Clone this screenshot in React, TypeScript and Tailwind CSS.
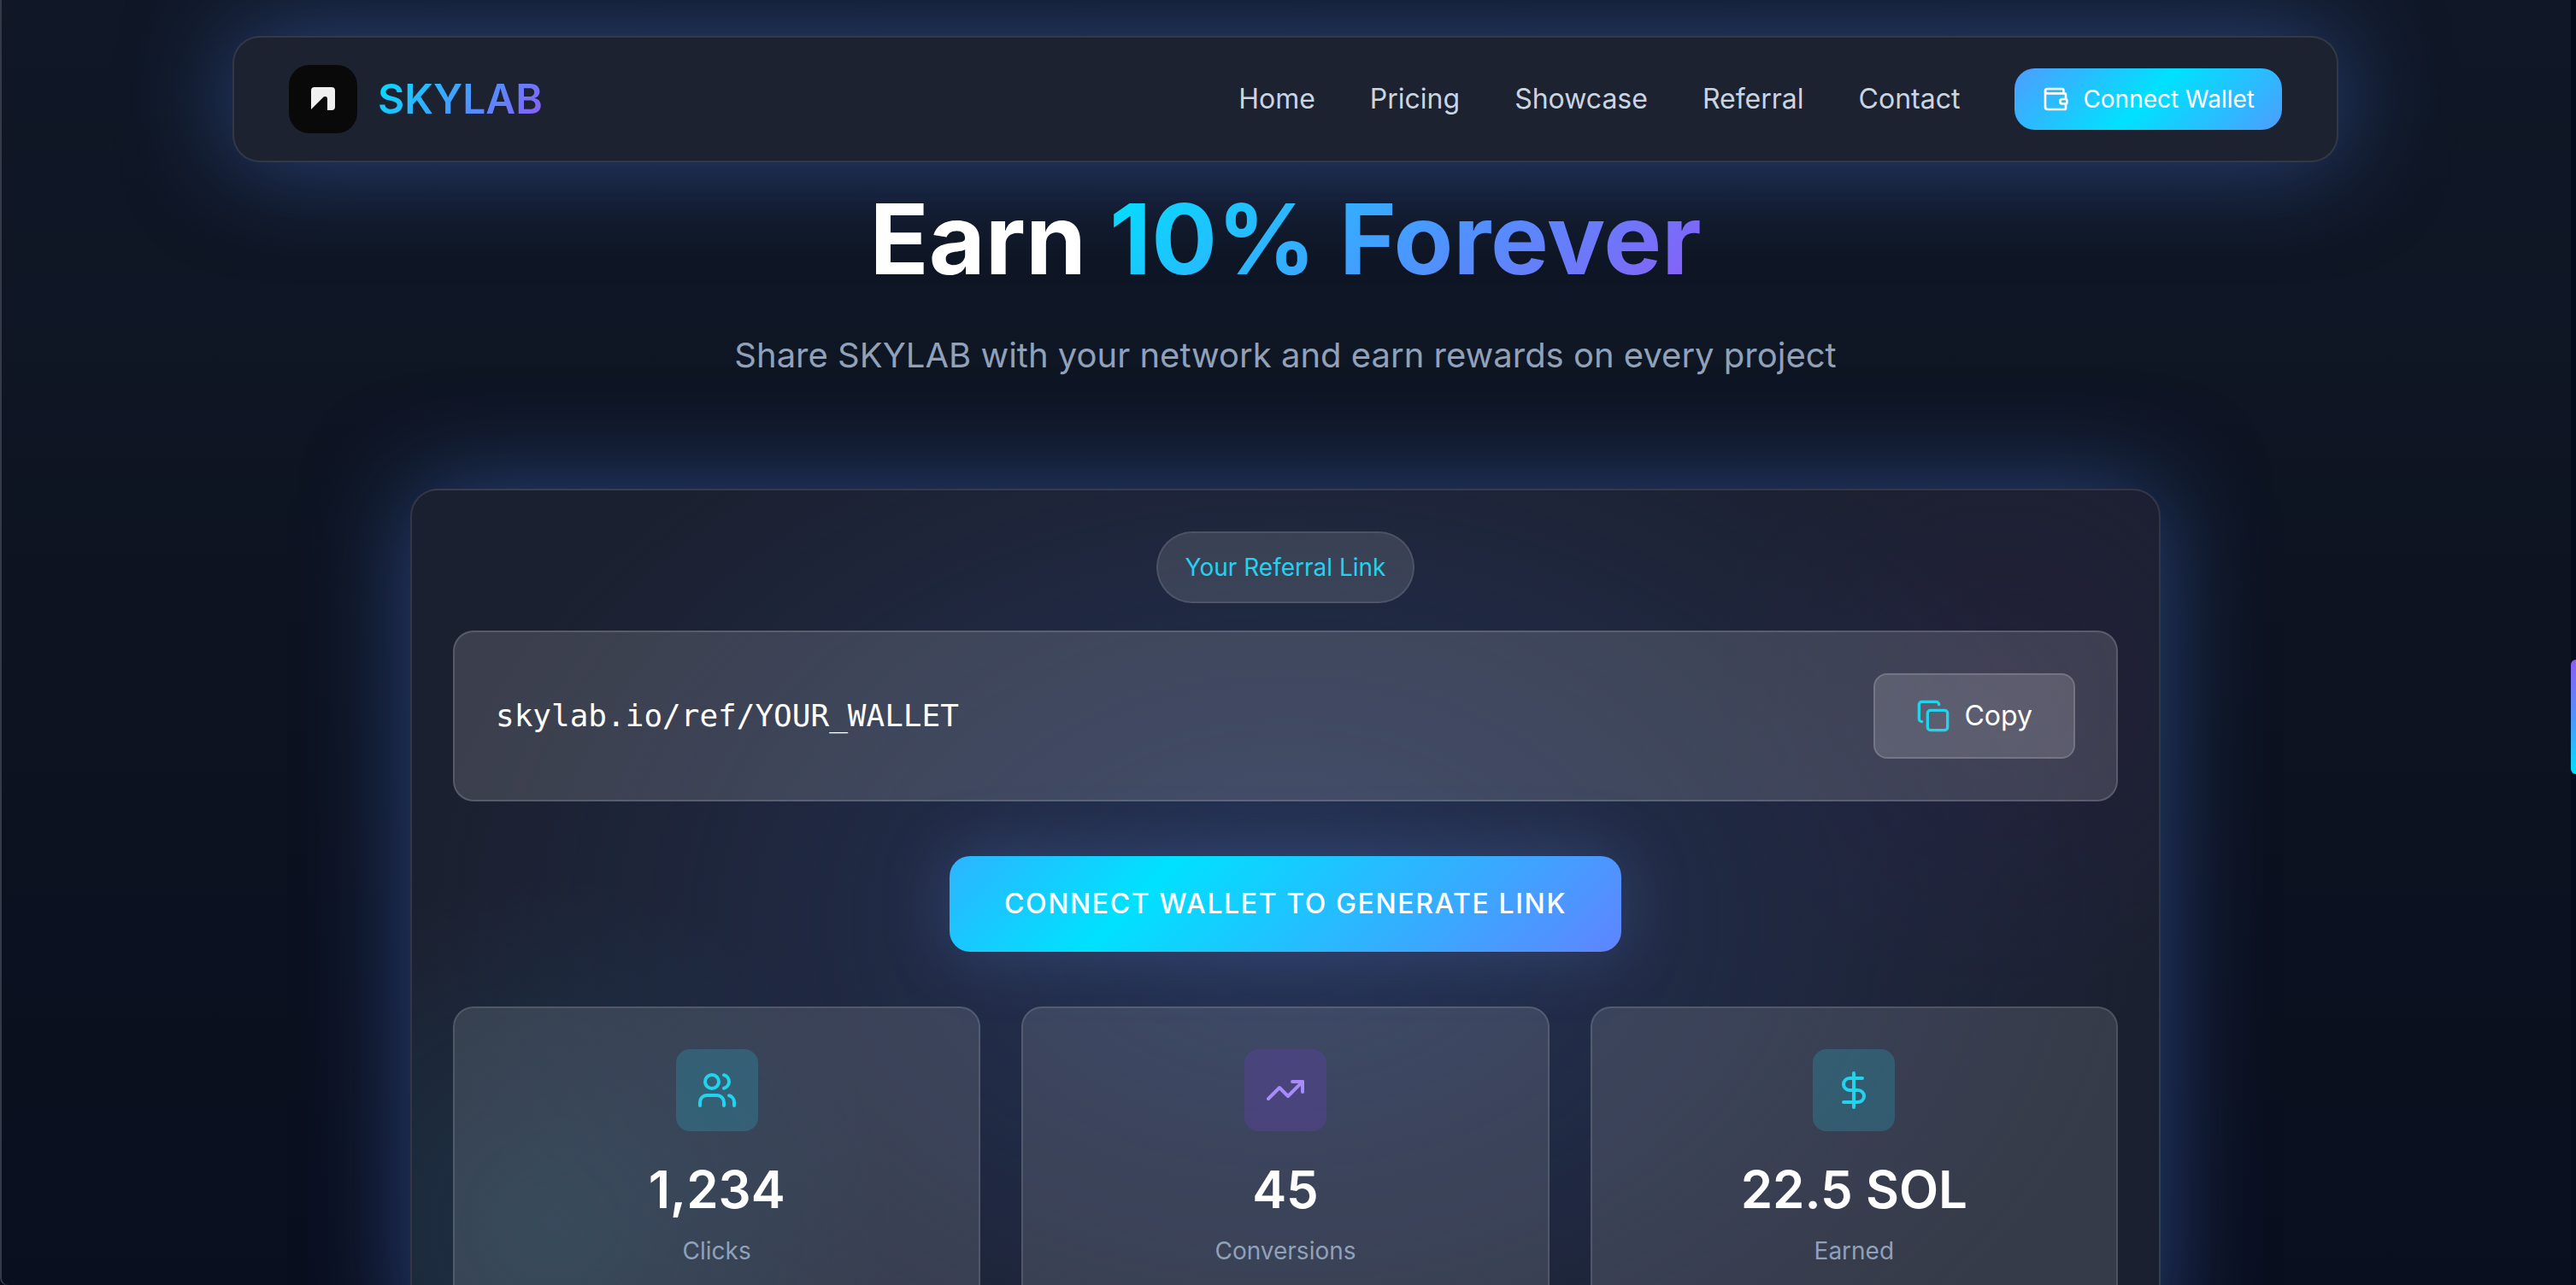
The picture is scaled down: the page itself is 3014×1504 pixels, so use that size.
import { useState } from 'react';
import { Copy, DollarSign, TrendingUp, Users, type LucideIcon } from 'lucide-react';

interface Stat {
  label: string;
  value: string;
  icon: LucideIcon;
  tile: string;
}

const links = ['Home', 'Pricing', 'Showcase', 'Referral', 'Contact'];

const stats: Stat[] = [
  { label: 'Clicks', value: '1,234', icon: Users, tile: 'bg-[#22d3ee]/20 text-[#22d3ee]' },
  { label: 'Conversions', value: '45', icon: TrendingUp, tile: 'bg-[#7c3aed]/20 text-[#a78bfa]' },
  { label: 'Earned', value: '22.5 SOL', icon: DollarSign, tile: 'bg-[#22d3ee]/20 text-[#22d3ee]' },
];

function WalletIcon() {
  return (
    <svg
      viewBox="0 0 24 24"
      fill="none"
      stroke="currentColor"
      strokeWidth="2"
      strokeLinecap="round"
      strokeLinejoin="round"
      className="size-8"
      aria-hidden="true"
    >
      <path d="M19 7V4a1 1 0 0 0-1-1H5a2 2 0 0 0 0 4h15a1 1 0 0 1 1 1v4h-3a2 2 0 0 0 0 4h3a1 1 0 0 0 1-1v-2a1 1 0 0 0-1-1" />
      <path d="M3 5v14a2 2 0 0 0 2 2h15a1 1 0 0 0 1-1v-4" />
    </svg>
  );
}

function Logo() {
  return (
    <a href="#home" className="flex items-center gap-6">
      <span className="flex size-20 items-center justify-center rounded-3xl bg-[#090909]">
        <svg viewBox="0 0 28 28" className="size-7" aria-hidden="true">
          <path d="M0 4a4 4 0 0 1 4-4h20a4 4 0 0 1 4 4v19a4 4 0 0 1-4 4h-5V14q0-3-2-3h-1q-1 0-2 1L0 26z" fill="#f0f0f0" />
        </svg>
      </span>
      <span className="bg-linear-135/srgb from-[#00e1ff] via-[#4d94ff] via-55% to-[#8b5cf6] bg-clip-text text-5xl font-semibold text-transparent">
        SKYLAB
      </span>
    </a>
  );
}

function Navbar() {
  return (
    <header className="relative mx-auto flex w-full max-w-[2464px] items-center justify-between rounded-4xl border-2 border-white/10 bg-[#1d2230] px-16 py-8 shadow-[0_0_120px_#446ec88c]">
      <Logo />
      <nav className="flex items-center gap-16">
        {links.map((link) => (
          <a key={link} href={`#${link.toLowerCase()}`} className="text-[32px] leading-12 text-slate-300">
            {link}
          </a>
        ))}
        <button
          type="button"
          className="flex items-center gap-4 rounded-3xl bg-linear-135/srgb from-[#4d9dff] via-[#00e1ff] to-[#4d9dff] px-8 py-4 text-[28px] leading-10 text-white"
        >
          <WalletIcon />
          Connect Wallet
        </button>
      </nav>
    </header>
  );
}

function ReferralLink() {
  const [copied, setCopied] = useState(false);
  const url = 'skylab.io/ref/YOUR_WALLET';

  const handleCopy = () => {
    navigator.clipboard?.writeText(url);
    setCopied(true);
    setTimeout(() => setCopied(false), 1500);
  };

  return (
    <div className="mt-8 flex w-full items-center justify-between rounded-3xl border-2 border-white/15 bg-white/14 p-12">
      <code className="font-['DejaVu_Sans_Mono',monospace] text-4xl text-white">{url}</code>
      <button
        type="button"
        onClick={handleCopy}
        className="flex items-center gap-4 rounded-2xl border-2 border-white/15 bg-white/15 px-12 py-6 text-[32px] leading-12 text-white"
      >
        <Copy className="size-10 text-[#22d3ee]" />
        {copied ? 'Copied' : 'Copy'}
      </button>
    </div>
  );
}

function StatCard({ stat }: { stat: Stat }) {
  const Icon = stat.icon;

  return (
    <div className="flex flex-col items-center rounded-3xl border-2 border-white/12 bg-white/12 p-12">
      <div className={`flex size-24 items-center justify-center rounded-2xl ${stat.tile}`}>
        <Icon className="size-12" />
      </div>
      <p className="mt-8 text-6xl leading-18 font-semibold text-white">{stat.value}</p>
      <p className="mt-4 text-[28px] leading-10 text-slate-400">{stat.label}</p>
    </div>
  );
}

export default function App() {
  return (
    <div className="flex h-screen overflow-hidden bg-[#050b1b] font-['Inter',sans-serif]">
      <main className="flex-1 overflow-hidden rounded-bl-lg bg-linear-to-b from-[#101827] via-[#0d1321] to-[#0a0f1f] px-8 pt-[42px] inset-shadow-[2px_0_0_#353a46]">
        <Navbar />

        <section className="relative mt-[30px] text-center">
          <h1 className="text-[114px] leading-[120px] font-bold text-white">
            Earn{' '}
            <span className="bg-linear-135/srgb from-[#00e1ff] via-[#4d94ff] via-55% to-[#8b5cf6] bg-clip-text text-transparent">
              10% Forever
            </span>
          </h1>
          <p className="mt-12 text-[40px] leading-14 text-slate-400">
            Share SKYLAB with your network and earn rewards on every project
          </p>
        </section>

        <section className="mx-auto mt-32 flex w-full max-w-[2048px] flex-col items-center rounded-4xl border-2 border-white/10 bg-[#1b2030] bg-[radial-gradient(1000px_700px_at_50%_50%,#2a3c68aa,transparent),radial-gradient(400px_400px_at_8%_85%,#1f425888,transparent),radial-gradient(350px_350px_at_91%_24%,#32205044,transparent)] p-12 shadow-[0_0_120px_#446ec88c]">
          <span className="rounded-full border-2 border-white/10 bg-white/12 px-8 py-5 text-[28px] leading-10 text-[#22d3ee]">
            Your Referral Link
          </span>
          <ReferralLink />
          <button
            type="button"
            className="mt-16 rounded-3xl bg-linear-135/srgb from-[#2db4ff] via-[#00e1ff] via-30% to-[#5f84ff] px-16 py-8 text-[32px] leading-12 font-medium tracking-wider text-white uppercase shadow-[0_0_80px_#5b7fd050]"
          >
            Connect Wallet to Generate Link
          </button>
          <div className="mt-16 grid w-full grid-cols-3 gap-12">
            {stats.map((stat) => (
              <StatCard key={stat.label} stat={stat} />
            ))}
          </div>
        </section>
      </main>

      {/* Scroll rail */}
      <div className="flex w-[6px] items-center pt-[174px]">
        <div className="h-[134px] w-full rounded-l-md bg-linear-to-b/srgb from-[#8b5cf6] via-[#4d94ff] to-[#00e1ff]" />
      </div>
    </div>
  );
}
